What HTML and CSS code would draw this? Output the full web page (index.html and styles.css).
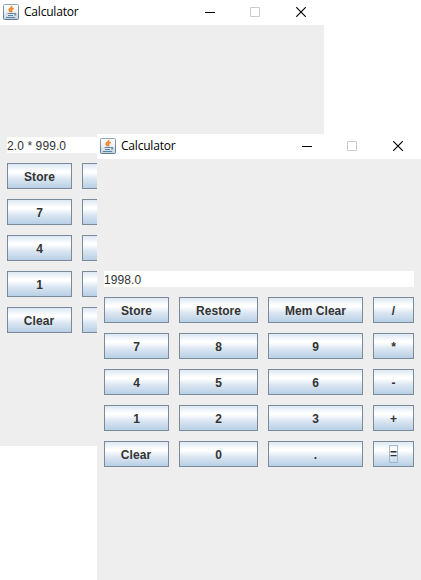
FILE: index.html
```
<!DOCTYPE html>
<html lang="en">
<head>
<meta charset="utf-8">
<title>Calculator</title>
<link rel="stylesheet" href="styles.css">
</head>
<body>
<svg class="defs" width="0" height="0">
  <defs>
    <linearGradient id="tile" x1="0" y1="0" x2="0" y2="1">
      <stop offset="0" stop-color="#8fa5b5"/>
      <stop offset="1" stop-color="#5c7890"/>
    </linearGradient>
    <linearGradient id="face" x1="0" y1="0" x2="0" y2="1">
      <stop offset="0" stop-color="#ffffff"/>
      <stop offset=".5" stop-color="#eef1f4"/>
      <stop offset="1" stop-color="#c3d0da"/>
    </linearGradient>
    <symbol id="java" viewBox="0 0 16 16">
      <rect x=".5" y=".5" width="15" height="15" rx="1" fill="url(#face)" stroke="url(#tile)"/>
      <path d="M8.8 2C9.4 4 5.7 4.5 6.2 6.1c.2.8 1.1 1.2 1.2 2.1M10.7 4.2C8.8 5 7.8 5.6 8.5 6.7c.4.7.2 1.1-.1 1.5" fill="none" stroke="#ee8222" stroke-width="1.6"/>
      <path d="M4.5 9.5h6.2M5 11.5h5M3 13.5h9.2M10.8 9.5h2v1.5h-1.8" fill="none" stroke="#49799f" stroke-width=".9"/>
    </symbol>
    <symbol id="minimize" viewBox="0 0 10 10"><path d="M0 5.5h10" stroke="#000"/></symbol>
    <symbol id="maximize" viewBox="0 0 10 10"><path d="M.5.5h9v9h-9z" fill="none" stroke="#ccc"/></symbol>
    <symbol id="close" viewBox="0 0 10 10"><path d="M.2.2l9.6 9.6M9.8.2L.2 9.8" stroke="#000" stroke-width="1.15"/></symbol>
  </defs>
</svg>

<main class="desktop">
  <section class="window window-back">
    <header class="titlebar">
      <svg class="app-icon"><use href="#java"/></svg>
      <span class="title">Calculator</span>
      <div class="controls">
        <svg><use href="#minimize"/></svg><svg><use href="#maximize"/></svg><svg class="close"><use href="#close"/></svg>
      </div>
    </header>
    <div class="content">
      <div class="display">2.0 * 999.0</div>
      <div class="keys">
        <button>Store</button><button></button><button></button><button></button>
        <button>7</button><button></button><button></button><button></button>
        <button>4</button><button></button><button></button><button></button>
        <button>1</button><button></button><button></button><button></button>
        <button class="clear">Clear</button><button></button><button></button><button></button>
      </div>
    </div>
  </section>

  <section class="window window-front">
    <header class="titlebar">
      <svg class="app-icon"><use href="#java"/></svg>
      <span class="title">Calculator</span>
      <div class="controls">
        <svg><use href="#minimize"/></svg><svg><use href="#maximize"/></svg><svg class="close"><use href="#close"/></svg>
      </div>
    </header>
    <div class="content">
      <div class="display">1998.0</div>
      <div class="keys">
        <button>Store</button><button>Restore</button><button>Mem Clear</button><button>/</button>
        <button>7</button><button>8</button><button>9</button><button>*</button>
        <button>4</button><button>5</button><button>6</button><button>-</button>
        <button>1</button><button>2</button><button>3</button><button>+</button>
        <button class="clear">Clear</button><button>0</button><button>.</button><button><span class="focus">=</span></button>
      </div>
    </div>
  </section>
</main>
</body>
</html>
```

FILE: styles.css
```
* { box-sizing: border-box; }

body {
  margin: 0;
  background: #fff;
  color: #333;
  font: 12px/16px "Liberation Sans", Arial, sans-serif;
}

.defs { position: absolute; }

.desktop {
  position: relative;
  width: 421px;
  height: 580px;
  overflow: hidden;
}

.window {
  position: absolute;
  display: flex;
  flex-direction: column;
  width: 324px;
  height: 446px;
  background: #eee;
}
.window-back { left: 0; top: 0; }
.window-front { left: 97px; top: 134px; }

.titlebar {
  display: flex;
  align-items: flex-start;
  height: 25px;
  flex: none;
  padding: 4px 18px 0 3px;
  background: #fff;
}
.app-icon { width: 16px; height: 16px; }
.title {
  margin-left: 5px;
  color: #000;
  font-family: "Open Sans", "Noto Sans", sans-serif;
  font-size: 12px;
  letter-spacing: -0.2px;
}
.controls {
  display: flex;
  gap: 35px;
  margin: 3px 0 0 auto;
}
.controls svg { width: 10px; height: 10px; }
.controls .close { margin-left: 1px; }

.content { padding: 112px 7px 0; }

.display {
  height: 16px;
  padding-top: 1px;
  background: #fff;
  letter-spacing: 0.1px;
  white-space: pre;
}

.keys {
  display: grid;
  grid-template-columns: 65px 79px 95px 41px;
  grid-auto-rows: 26px;
  gap: 10px;
  margin-top: 10px;
}

button {
  display: flex;
  align-items: center;
  justify-content: center;
  padding: 2px 0 0;
  border: 1px solid #7a8a99;
  border-radius: 0;
  background: linear-gradient(#dde8f3 0%, #fff 30%, #fff 36%, #dde8f3 60%, #b8cfe5 100%);
  color: #333;
  font: bold 12px/16px "Liberation Sans", Arial, sans-serif;
  letter-spacing: 0.05px;
}
.clear { padding-right: 1px; }

.focus {
  width: 9px;
  height: 18px;
  margin-top: -2px;
  outline: 1px solid #a3b8cc;
  outline-offset: -1px;
  line-height: 19px;
  text-align: center;
}
```
